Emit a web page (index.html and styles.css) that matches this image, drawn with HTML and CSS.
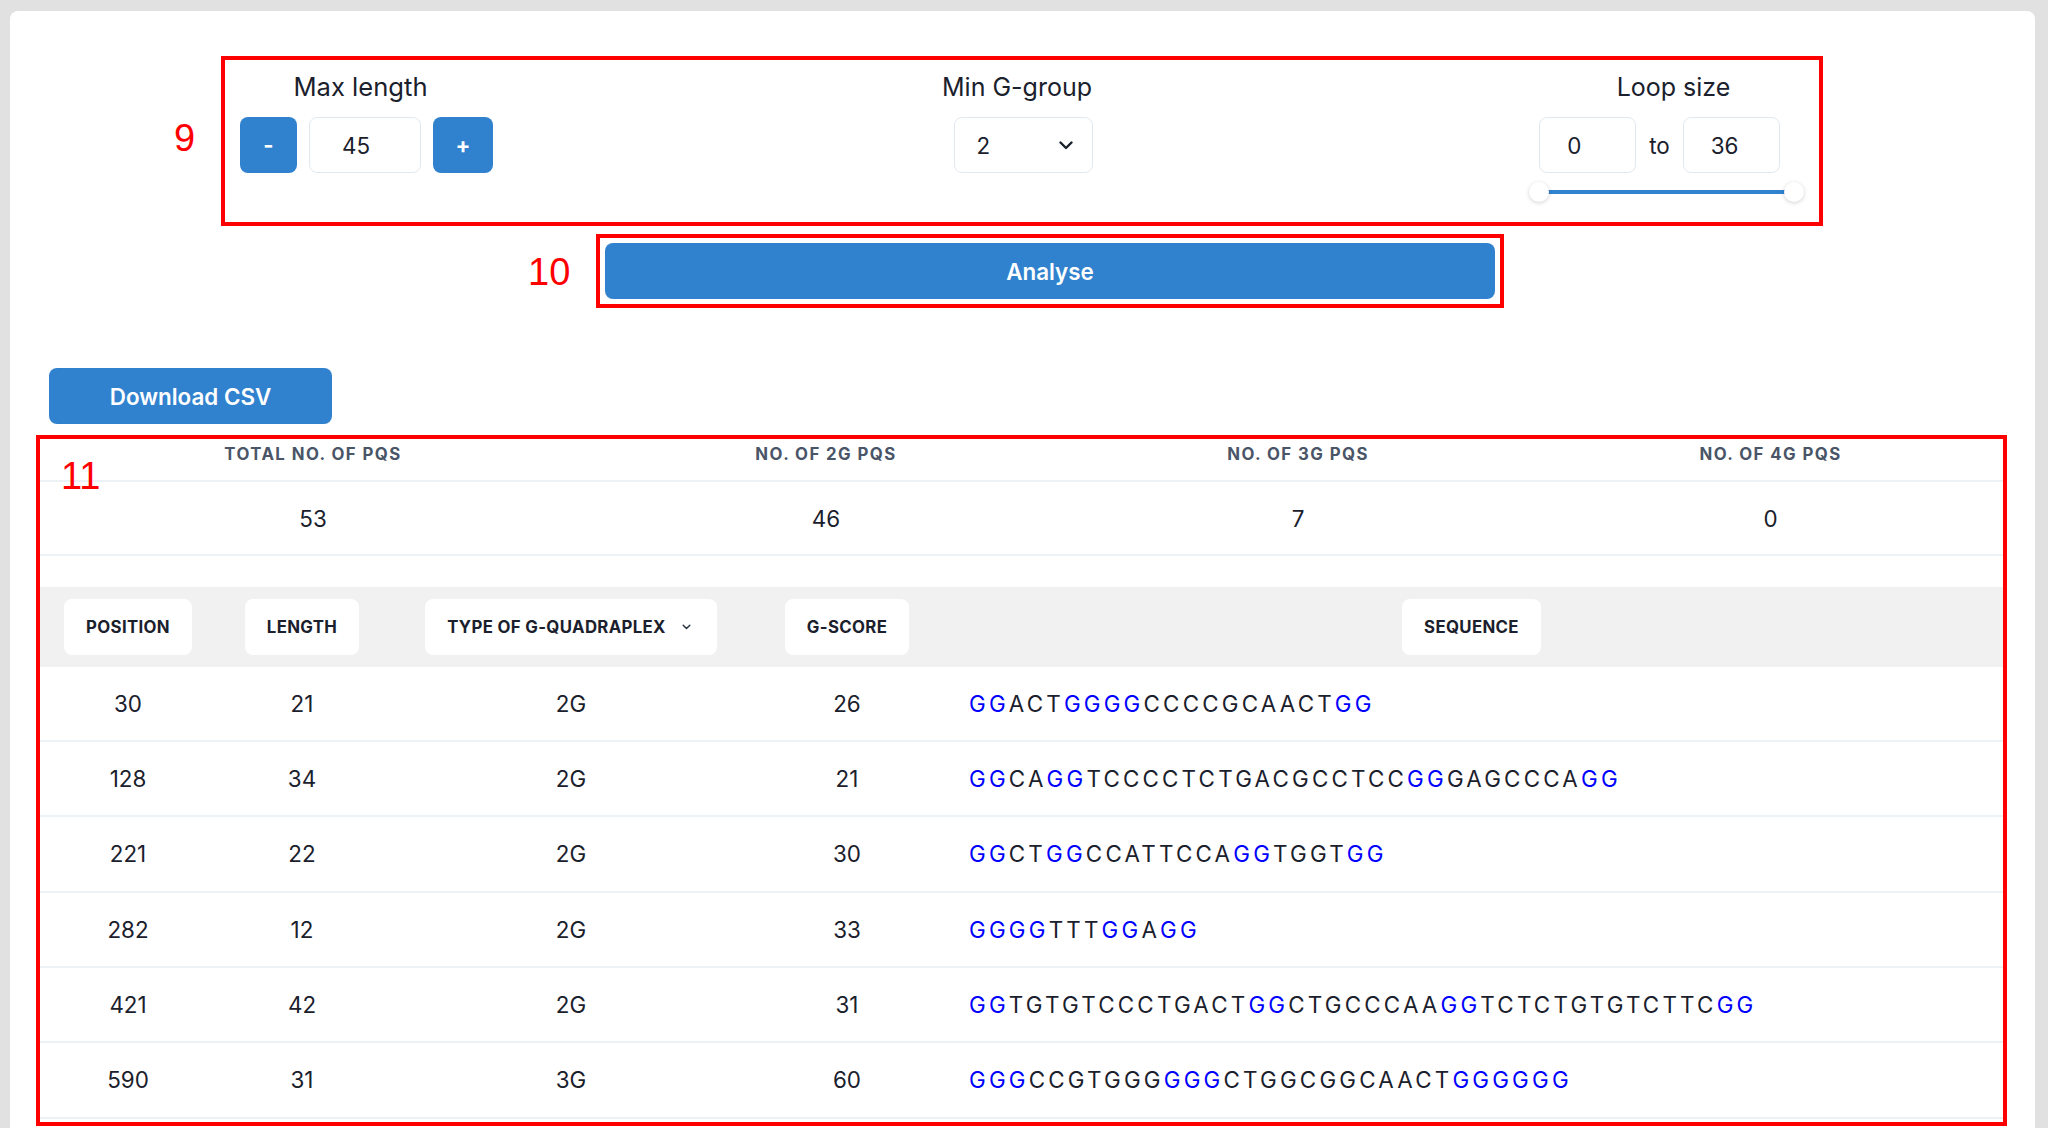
FILE: index.html
```html
<!DOCTYPE html>
<html lang="en">
<head>
<meta charset="utf-8">
<title>G-Quadruplex Analysis</title>
<link rel="stylesheet" href="styles.css">
</head>
<body>
<div class="card">
  <section class="controls annot">
    <span class="tag tag-9">9</span>
    <div class="group group-max">
      <label class="label">Max length</label>
      <div class="stepper">
        <button class="btn-sq minus">-</button>
        <div class="num-input wide">45</div>
        <button class="btn-sq plus">+</button>
      </div>
    </div>
    <div class="group group-min">
      <label class="label">Min G-group</label>
      <div class="select"><span>2</span>
        <svg class="chev" width="14" height="9" viewBox="0 0 14 9"><path d="M1.5 1.5 L7 7 L12.5 1.5" fill="none" stroke="#1a202c" stroke-width="2.4" stroke-linecap="round" stroke-linejoin="round"/></svg>
      </div>
    </div>
    <div class="group group-loop">
      <label class="label loop-label">Loop size</label>
      <div class="range-inputs">
        <div class="num-input small">0</div>
        <span class="to">to</span>
        <div class="num-input small">36</div>
      </div>
      <div class="slider">
        <span class="thumb"></span>
        <span class="track"></span>
        <span class="thumb"></span>
      </div>
    </div>
  </section>

  <div class="analyse-wrap annot">
    <span class="tag tag-10">10</span>
    <button class="btn-primary analyse">Analyse</button>
  </div>

  <button class="btn-primary download">Download CSV</button>

  <section class="results annot">
    <span class="tag tag-11">11</span>
    <div class="stats">
      <div class="st-h">Total no. of PQS</div>
      <div class="st-h">No. of 2G PQS</div>
      <div class="st-h">No. of 3G PQS</div>
      <div class="st-h">No. of 4G PQS</div>
      <div class="st-v">53</div>
      <div class="st-v">46</div>
      <div class="st-v">7</div>
      <div class="st-v">0</div>
    </div>

    <div class="ptable">
      <div class="prow phead">
        <div class="pc"><span class="pill">Position</span></div>
        <div class="pc"><span class="pill">Length</span></div>
        <div class="pc"><span class="pill pill-sort">Type of G-Quadraplex
          <svg class="mini-chev" width="9" height="6" viewBox="0 0 9 6"><path d="M1.2 1.2 L4.5 4.5 L7.8 1.2" fill="none" stroke="#2d3748" stroke-width="1.5" stroke-linecap="round" stroke-linejoin="round"/></svg></span></div>
        <div class="pc"><span class="pill">G-Score</span></div>
        <div class="pc"><span class="pill">Sequence</span></div>
      </div>

      <div class="prow">
        <div class="pc">30</div><div class="pc">21</div><div class="pc">2G</div><div class="pc">26</div>
        <div class="pc seq"><span class="g">GG</span>ACT<span class="g">GGGG</span>CCCCGCAACT<span class="g">GG</span></div>
      </div>
      <div class="prow">
        <div class="pc">128</div><div class="pc">34</div><div class="pc">2G</div><div class="pc">21</div>
        <div class="pc seq"><span class="g">GG</span>CA<span class="g">GG</span>TCCCCTCTGACGCCTCC<span class="g">GG</span>GAGCCCA<span class="g">GG</span></div>
      </div>
      <div class="prow">
        <div class="pc">221</div><div class="pc">22</div><div class="pc">2G</div><div class="pc">30</div>
        <div class="pc seq"><span class="g">GG</span>CT<span class="g">GG</span>CCATTCCA<span class="g">GG</span>TGGT<span class="g">GG</span></div>
      </div>
      <div class="prow">
        <div class="pc">282</div><div class="pc">12</div><div class="pc">2G</div><div class="pc">33</div>
        <div class="pc seq"><span class="g">GGGG</span>TTT<span class="g">GG</span>A<span class="g">GG</span></div>
      </div>
      <div class="prow">
        <div class="pc">421</div><div class="pc">42</div><div class="pc">2G</div><div class="pc">31</div>
        <div class="pc seq"><span class="g">GG</span>TGTGTCCCTGACT<span class="g">GG</span>CTGCCCAA<span class="g">GG</span>TCTCTGTGTCTTC<span class="g">GG</span></div>
      </div>
      <div class="prow">
        <div class="pc">590</div><div class="pc">31</div><div class="pc">3G</div><div class="pc">60</div>
        <div class="pc seq"><span class="g">GGG</span>CCGTGGG<span class="g">GGG</span>CTGGCGGCAACT<span class="g">GGGGGG</span></div>
      </div>
    </div>
  </section>
</div>
</body>
</html>
```

FILE: styles.css
```css
html, body {
  margin: 0;
  padding: 0;
  height: 100%;
  overflow: hidden;
}
body {
  background: #e1e1e1;
  font-family: Inter, "Noto Sans", sans-serif;
  color: #1a202c;
  padding-top: 11px;
  box-sizing: border-box;
}
.card {
  background: #ffffff;
  margin: 0 13px 0 10px;
  border-radius: 8px;
  min-height: 1300px;
  overflow: hidden;
}

/* annotation boxes */
.annot { position: relative; }
.annot::after {
  content: "";
  position: absolute;
  inset: 0;
  border: 4px solid #ff0000;
  pointer-events: none;
}
.tag {
  position: absolute;
  color: #ff0000;
  font-family: "Liberation Sans", Arial, sans-serif;
  font-size: 38px;
  line-height: 1;
  z-index: 2;
}
.tag-9 { left: -47px; top: 63px; }
.tag-10 { left: -68px; top: 19px; }
.tag-11 { left: 25px; top: 22px; }

/* controls */
.controls {
  width: 1602px;
  margin: 45px 0 0 211px;
  box-sizing: border-box;
  padding: 16px 19px 24px;
  display: flex;
  justify-content: space-between;
  align-items: flex-start;
}
.group {
  display: flex;
  flex-direction: column;
  align-items: center;
}
.label {
  font-size: 25px;
  line-height: 30px;
  margin-bottom: 15px;
  color: #1a202c;
}
.group-max .label { margin-right: 12px; font-size: 25.6px; }
.group-min { margin-left: 12px; }
.loop-label { padding-left: 14px; }
.stepper {
  display: flex;
  gap: 12px;
}
.btn-sq {
  width: 57px;
  height: 56px;
  border: none;
  border-radius: 8px;
  background: #3182ce;
  color: #fff;
  font-family: Inter, sans-serif;
  font-size: 22px;
  font-weight: 700;
  padding: 0;
}
.btn-sq.plus { width: 60px; }
.num-input {
  height: 56px;
  box-sizing: border-box;
  border: 1.5px solid #e2e8f0;
  border-radius: 8px;
  font-size: 22.4px;
  display: flex;
  align-items: center;
}
.num-input.wide { width: 112px; padding-left: 32px; }
.num-input.small { width: 97px; padding-left: 27px; }
.select {
  width: 139px;
  height: 56px;
  box-sizing: border-box;
  border: 1.5px solid #e2e8f0;
  border-radius: 8px;
  font-size: 22.4px;
  display: flex;
  align-items: center;
  justify-content: space-between;
  padding: 0 19px 0 22px;
  margin-left: 12px;
}
.range-inputs {
  display: flex;
  align-items: center;
  gap: 13px;
  margin-right: 14px;
}
.to { font-size: 22.4px; }
.slider {
  width: 275px;
  height: 20px;
  margin-top: 9px;
  display: flex;
  align-items: center;
}
.thumb {
  width: 20px;
  height: 20px;
  border-radius: 50%;
  background: #fff;
  box-shadow: 0 1px 4px rgba(0,0,0,0.18);
  flex: none;
  position: relative;
  z-index: 1;
}
.track {
  flex: 1;
  height: 4px;
  background: #3182ce;
  margin: 0 -2px;
}

/* buttons */
.btn-primary {
  display: block;
  border: none;
  border-radius: 8px;
  background: #3182ce;
  color: #fff;
  font-family: Inter, sans-serif;
  font-weight: 600;
  font-size: 22.4px;
  height: 56px;
  padding: 0;
}
.analyse-wrap {
  width: 908px;
  box-sizing: border-box;
  margin: 8px 0 0 586px;
  padding: 9px;
}
.analyse { width: 100%; }
.download {
  width: 283px;
  margin: 60px 0 0 39px;
}

/* results */
.results {
  width: 1971px;
  height: 691px;
  margin: 11px 0 0 26px;
  overflow: hidden;
}
.stats {
  display: grid;
  grid-template-columns: 554px 472px 472px 473px;
}
.st-h {
  height: 47px;
  box-sizing: border-box;
  padding-top: 9px;
  border-bottom: 2px solid #edf2f7;
  text-align: center;
  text-transform: uppercase;
  font-weight: 700;
  font-size: 16.8px;
  line-height: 20px;
  letter-spacing: 0.085em;
  color: #4a5568;
}
.st-v {
  height: 74px;
  box-sizing: border-box;
  border-bottom: 2px solid #edf2f7;
  display: flex;
  align-items: center;
  justify-content: center;
  font-size: 22.4px;
}
.ptable { margin-top: 31px; }
.prow {
  display: grid;
  grid-template-columns: 184px 164px 374px 178px 1fr;
  height: 75.33px;
  box-sizing: border-box;
  border-bottom: 2px solid #edf2f7;
  font-size: 22.4px;
}
.prow:nth-child(2) { height: 75px; }
.pc {
  display: flex;
  align-items: center;
  justify-content: center;
}
.phead {
  height: 80px;
  background: #f1f1f1;
  border-bottom: none;
}
.pill {
  height: 56px;
  box-sizing: border-box;
  padding: 0 22px;
  background: #fff;
  border-radius: 8px;
  display: inline-flex;
  align-items: center;
  text-transform: uppercase;
  font-weight: 700;
  font-size: 16.8px;
  letter-spacing: 0.02em;
  color: #1a202c;
}
.pill-sort { padding-right: 26px; }
.mini-chev { margin-left: 16px; }
.pc.seq {
  justify-content: flex-start;
  padding-left: 33px;
  letter-spacing: 3.2px;
}
.g { color: #0000ff; }
```
